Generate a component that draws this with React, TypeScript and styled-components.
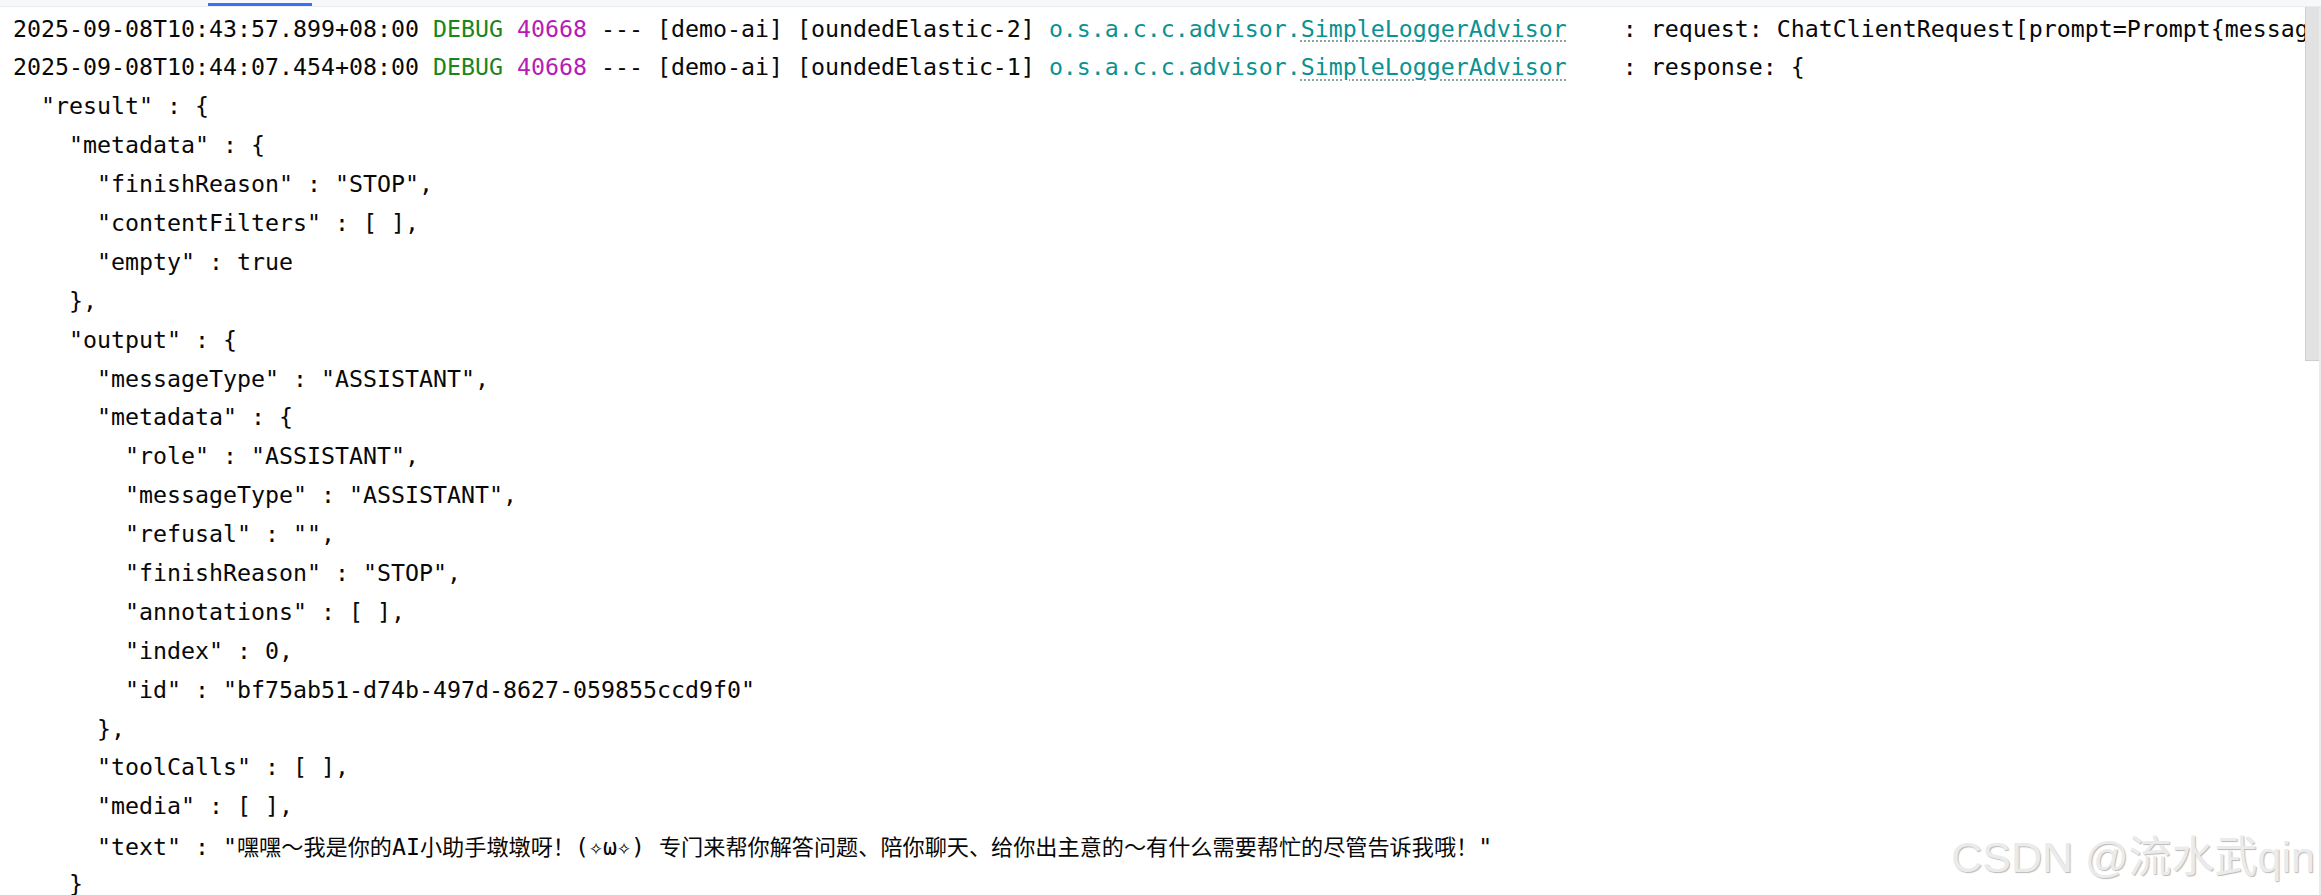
import React from "react";
import styled, { createGlobalStyle } from "styled-components";

const GlobalStyle = createGlobalStyle`
  html, body {
    margin: 0;
    padding: 0;
    background: #ffffff;
    overflow: hidden;
  }
  #root {
    width: 2321px;
    height: 895px;
  }
`;

const Page = styled.div`
  display: flex;
  flex-direction: column;
  width: 2321px;
  height: 895px;
  background: #ffffff;
`;

const TabStrip = styled.div`
  display: flex;
  align-items: flex-end;
  height: 7px;
  box-sizing: border-box;
  background: #f7f8fa;
  border-bottom: 1px solid #ebecf0;
  flex: none;
`;

const TabIndicator = styled.div`
  margin-left: 208px;
  width: 104px;
  height: 3px;
  background: #3574f0;
`;

const ConsoleArea = styled.div`
  position: relative;
  flex: 1;
  overflow: hidden;
  border-right: 2px solid #ebebeb;
`;

const Lines = styled.div`
  display: flex;
  flex-direction: column;
  padding: 2.5px 0 0 13px;
  font-family: "DejaVu Sans Mono", "Liberation Mono", monospace;
  font-size: 23.25px;
  color: #080808;
`;

const Line = styled.div`
  height: 38.9px;
  line-height: 38.9px;
  white-space: pre;
  flex: none;
`;

type ToneName = "plain" | "level" | "pid" | "logger";
const toneColors: Record<ToneName, string> = {
  plain: "#080808",
  level: "#1a851a",
  pid: "#b51cb5",
  logger: "#0a9191",
};

const Tone = styled.span<{ $c: ToneName }>`
  color: ${(p) => toneColors[p.$c]};
`;

const LoggerClass = styled.span`
  color: #0a9191;
  text-decoration: underline dotted #8aa3a3;
  text-decoration-thickness: 2px;
  text-underline-offset: 4px;
`;

const Cjk = styled.span`
  font-family: "Noto Sans CJK SC", sans-serif;
  font-size: 22.15px;
  line-height: 38.9px;
`;

const ScrollThumb = styled.div`
  position: absolute;
  top: 0;
  right: 0;
  width: 14px;
  height: 354px;
  box-sizing: border-box;
  background: #e2e2e2;
  border-left: 1px solid #d0d0d0;
  border-bottom: 1px solid #cdcdcd;
`;

const Watermark = styled.div`
  position: absolute;
  right: 4px;
  bottom: 16px;
  font-family: "Liberation Sans", Arial, "Noto Sans CJK SC", sans-serif;
  font-size: 43px;
  line-height: 43px;
  color: #ebebeb;
  text-shadow: 1px 1px 1px rgba(0, 0, 0, 0.28);
  white-space: pre;
  pointer-events: none;
`;

type LogEntry = { ts: string; thread: string; msg: string };

const logEntries: LogEntry[] = [
  {
    ts: "2025-09-08T10:43:57.899+08:00",
    thread: "[oundedElastic-2]",
    msg: ": request: ChatClientRequest[prompt=Prompt{messages=[UserMessage{content='hello', properties={messageType=USER}, messageType=USER}], modelOptions=DashScopeChatOptions}]",
  },
  {
    ts: "2025-09-08T10:44:07.454+08:00",
    thread: "[oundedElastic-1]",
    msg: ": response: {",
  },
];

const jsonLines: string[] = [
  '  "result" : {',
  '    "metadata" : {',
  '      "finishReason" : "STOP",',
  '      "contentFilters" : [ ],',
  '      "empty" : true',
  "    },",
  '    "output" : {',
  '      "messageType" : "ASSISTANT",',
  '      "metadata" : {',
  '        "role" : "ASSISTANT",',
  '        "messageType" : "ASSISTANT",',
  '        "refusal" : "",',
  '        "finishReason" : "STOP",',
  '        "annotations" : [ ],',
  '        "index" : 0,',
  '        "id" : "bf75ab51-d74b-497d-8627-059855ccd9f0"',
  "      },",
  '      "toolCalls" : [ ],',
  '      "media" : [ ],',
];

const LogLine: React.FC<{ entry: LogEntry }> = ({ entry }) => (
  <Line>
    <Tone $c="plain">{entry.ts} </Tone>
    <Tone $c="level">DEBUG</Tone> <Tone $c="pid">40668</Tone>
    {" --- [demo-ai] "}
    {entry.thread}{" "}
    <Tone $c="logger">o.s.a.c.c.advisor.</Tone>
    <LoggerClass>SimpleLoggerAdvisor</LoggerClass>
    {"    "}
    {entry.msg}
  </Line>
);

export default function App() {
  return (
    <>
      <GlobalStyle />
      <Page>
        <TabStrip>
          <TabIndicator />
        </TabStrip>
        <ConsoleArea>
          <Lines>
            {logEntries.map((e) => (
              <LogLine key={e.ts} entry={e} />
            ))}
            {jsonLines.map((l, i) => (
              <Line key={i}>{l}</Line>
            ))}
            <Line>
              {'      "text" : "'}
              <Cjk>嘿嘿～我是你的</Cjk>
              AI
              <Cjk>小助手墩墩呀！</Cjk>
              {"(✧ω✧) "}
              <Cjk>专门来帮你解答问题、陪你聊天、给你出主意的～有什么需要帮忙的尽管告诉我哦！</Cjk>
              {'"'}
            </Line>
            <Line>{"    }"}</Line>
          </Lines>
          <ScrollThumb />
          <Watermark>CSDN @流水武qin</Watermark>
        </ConsoleArea>
      </Page>
    </>
  );
}
